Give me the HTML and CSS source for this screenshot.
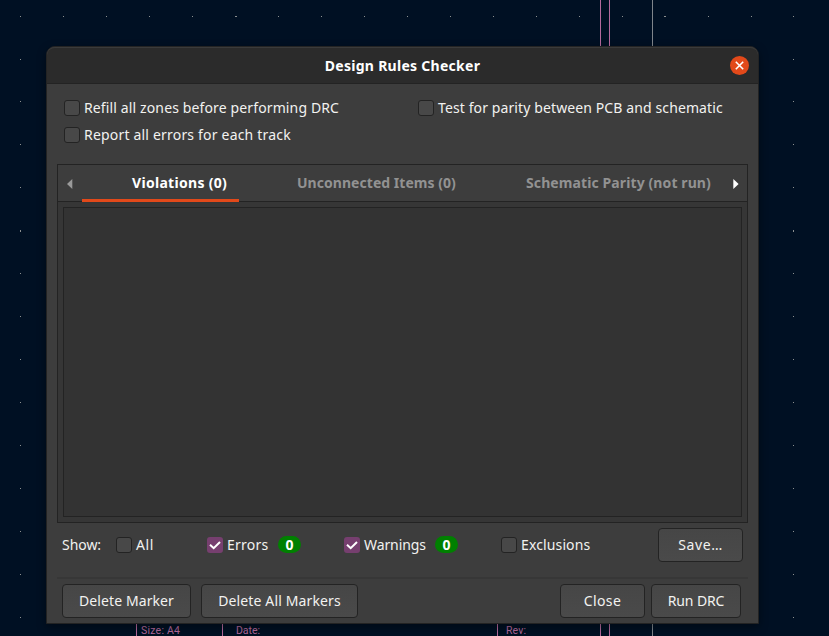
FILE: index.html
```
<!DOCTYPE html>
<html lang="en">
<head>
<meta charset="utf-8">
<title>Design Rules Checker</title>
<link rel="stylesheet" href="styles.css">
</head>
<body>
<svg class="board" width="829" height="636" viewBox="0 0 829 636" shape-rendering="crispEdges" aria-hidden="true">
  <g class="grid">
    <path d="M20 16.5h1m42 0h1m42 0h1m42 0h1m42 0h1m42 0h2m41 0h1m42 0h1m42 0h1m42 0h1m42 0h1m42 0h1m42 0h1m42 0h1m42 0h1m41 0h2m42 0h1m42 0h1m41 0h1"/>
    <path d="M20.5 59v1m0 41v1m0 42v1m0 42v1m0 42v2m0 41v1m0 42v1m0 42v1m0 42v1m0 42v1m0 42v1m0 42v1m0 42v1m0 42v1"/>
    <path d="M793.5 59v1m0 41v1m0 42v1m0 42v1m0 42v2m0 41v1m0 42v1m0 42v1m0 42v1m0 42v1m0 42v1m0 42v1m0 42v1m0 42v1"/>
  </g>
  <path class="sheet" d="M600.5 0v636M609.5 0v636M136.5 600v36M222.5 600v36M497.5 600v36"/>
  <path class="edge" d="M652.5 0v636"/>
  <g class="fields">
    <text x="141" y="634" textLength="39">Size: A4</text>
    <text x="236" y="634" textLength="24">Date:</text>
    <text x="506" y="634" textLength="20">Rev:</text>
  </g>
</svg>

<main class="dialog">
  <header class="titlebar">
    <h1 class="title">Design Rules Checker</h1>
    <button class="close" aria-label="Close window">
      <svg width="9" height="9" viewBox="0 0 9 9"><path d="M0.8 0.8l7.4 7.4M8.2 0.8L0.8 8.2"/></svg>
    </button>
  </header>

  <section class="options">
    <label class="check"><span class="box"></span><span class="t-refill">Refill all zones before performing DRC</span></label>
    <label class="check"><span class="box"></span><span class="t-parity">Test for parity between PCB and schematic</span></label>
    <label class="check"><span class="box"></span><span class="t-report">Report all errors for each track</span></label>
  </section>

  <section class="notebook">
    <nav class="tabs">
      <span class="arrow"><svg width="6" height="10" viewBox="0 0 6 10"><path class="dim" d="M5.3 0v10L0 5z"/></svg></span>
      <span class="tab active">Violations (0)</span>
      <span class="tab unconnected">Unconnected Items (0)</span>
      <span class="tab schematic">Schematic Parity (not run)</span>
      <span class="arrow next"><svg width="6" height="10" viewBox="0 0 6 10"><path d="M0.3 0v10L5.6 5z"/></svg></span>
    </nav>
    <div class="list"></div>
  </section>

  <section class="filters">
    <span class="show">Show:</span>
    <label class="check all"><span class="box"></span><span class="t-all">All</span></label>
    <label class="check errors"><span class="box on"><svg width="16" height="16" viewBox="0 0 16 16"><path d="M3 7.7l3.7 3.5L13 5"/></svg></span><span class="t-errors">Errors</span><b class="badge">0</b></label>
    <label class="check warnings"><span class="box on"><svg width="16" height="16" viewBox="0 0 16 16"><path d="M3 7.7l3.7 3.5L13 5"/></svg></span><span class="t-warnings">Warnings</span><b class="badge">0</b></label>
    <label class="check"><span class="box"></span><span>Exclusions</span></label>
    <button class="button save">Save…</button>
  </section>

  <footer class="actions">
    <button class="button marker">Delete Marker</button>
    <button class="button markers">Delete All Markers</button>
    <button class="button dismiss">Close</button>
    <button class="button run">Run DRC</button>
  </footer>
</main>
</body>
</html>
```
FILE: styles.css
```
* { box-sizing: border-box; }

body {
  margin: 0;
  height: 636px;
  padding: 46px 0 0 46px;
  overflow: hidden;
  background: #001023;
  color: #f2f2f0;
  font: 14px/20px "Noto Sans", sans-serif;
  letter-spacing: 0.13px;
  white-space: nowrap;
}

.board { position: absolute; left: 0; top: 0; fill: none; }
.grid { stroke: #8c9090; }
.sheet { stroke: #b4699c; }
.edge { stroke: #7f858b; }
.fields { fill: #b4699c; font: 10.5px Roboto, sans-serif; letter-spacing: 0; }

.dialog {
  position: relative;
  width: 713px;
  height: 578px;
  border: 1px solid #232323;
  border-radius: 9px 9px 0 0;
  background: #3d3d3d;
  box-shadow: 0 3px 10px rgba(0, 0, 0, 0.4);
}

.titlebar {
  display: grid;
  grid-template-columns: 1fr auto 1fr;
  align-items: center;
  height: 37px;
  border-top: 1px solid #3b3b3b;
  border-bottom: 1px solid #232323;
  border-radius: 8px 8px 0 0;
  background: #2b2b2b;
}
.title {
  grid-column: 2;
  margin: 1px 0 0;
  color: #fff;
  font-size: 14px;
  line-height: 20px;
  letter-spacing: 0.28px;
}
.close {
  justify-self: end;
  display: grid;
  place-items: center;
  width: 19px;
  height: 19px;
  margin: 0 9px 1px 0;
  padding: 0;
  border: 0;
  border-radius: 50%;
  background: #e2491a;
}
.close path { fill: none; stroke: #fff; stroke-width: 1.6; }

.options {
  display: grid;
  grid-template-columns: 354px auto;
  grid-auto-rows: 20px;
  row-gap: 7px;
  padding: 14px 0 0 17px;
}
.check { display: flex; align-items: center; gap: 4px; }
.box {
  width: 16px;
  height: 16px;
  border: 1px solid #232323;
  border-radius: 3px;
  background: #484848;
}
.box.on { border: 0; background: #763f6f; }
.box svg { display: block; }
.box path { fill: none; stroke: #fff; stroke-width: 2; }
.t-parity { letter-spacing: 0.11px; }
.t-report { letter-spacing: 0.19px; }

.notebook {
  height: 359px;
  margin: 19px 10px 0;
  padding-bottom: 5px;
  display: flex;
  flex-direction: column;
  border: 1px solid #232323;
  background: #363636;
}
.tabs {
  display: grid;
  grid-template-columns: 24px 157px 197px 287px 24px;
  height: 37px;
  border-bottom: 1px solid #232323;
  background: #3d3d3d;
  color: #929292;
  font-weight: bold;
}
.arrow { display: grid; place-items: center; }
.arrow path { fill: #fff; }
.arrow .dim { fill: #9a9a9a; }
.arrow.next { padding-left: 1px; }
.tab { padding-top: 8px; height: 37px; }
.tab.active {
  padding-left: 50px;
  border-bottom: 3px solid #e2491a;
  color: #fff;
  letter-spacing: 0.3px;
}
.unconnected { padding-left: 58px; letter-spacing: 0.04px; }
.schematic { padding-left: 90px; letter-spacing: 0.1px; }
.list { flex: 1; margin: 5px 5px 0; border: 1px solid #232323; background: #333; }

.filters {
  display: flex;
  align-items: center;
  height: 54px;
  padding: 0 15px;
}
.filters .check { margin-top: -10px; }
.show { width: 54px; margin-top: -10px; letter-spacing: -0.05px; }
.all { width: 91px; }
.errors { width: 137px; }
.warnings { width: 157px; }
.badge {
  width: 23px;
  height: 17px;
  margin: -1px 43px 0 auto;
  border-radius: 9px;
  background: #008000;
  color: #fff;
  line-height: 17px;
  letter-spacing: 0;
  text-align: center;
}
.t-all { letter-spacing: 0.6px; }
.t-errors { letter-spacing: 0.25px; }
.t-warnings { letter-spacing: -0.1px; }

.button {
  height: 34px;
  padding: 0;
  border: 1px solid #232323;
  border-radius: 4px;
  background: linear-gradient(#464646, #4a4a4a);
  color: #f2f2f0;
  font: inherit;
  letter-spacing: 0.1px;
}
.save { width: 85px; margin: -10px 0 0 auto; letter-spacing: 0.6px; }

.actions {
  display: flex;
  gap: 10px;
  margin: 0 10px;
  padding: 5px 7px 0 5px;
  border-top: 2px solid #373737;
}
.marker { width: 129px; }
.markers { width: 157px; letter-spacing: 0.13px; }
.dismiss { width: 85px; margin-left: auto; letter-spacing: 0.4px; }
.run { width: 90px; margin-left: -4px; letter-spacing: -0.1px; }
```
